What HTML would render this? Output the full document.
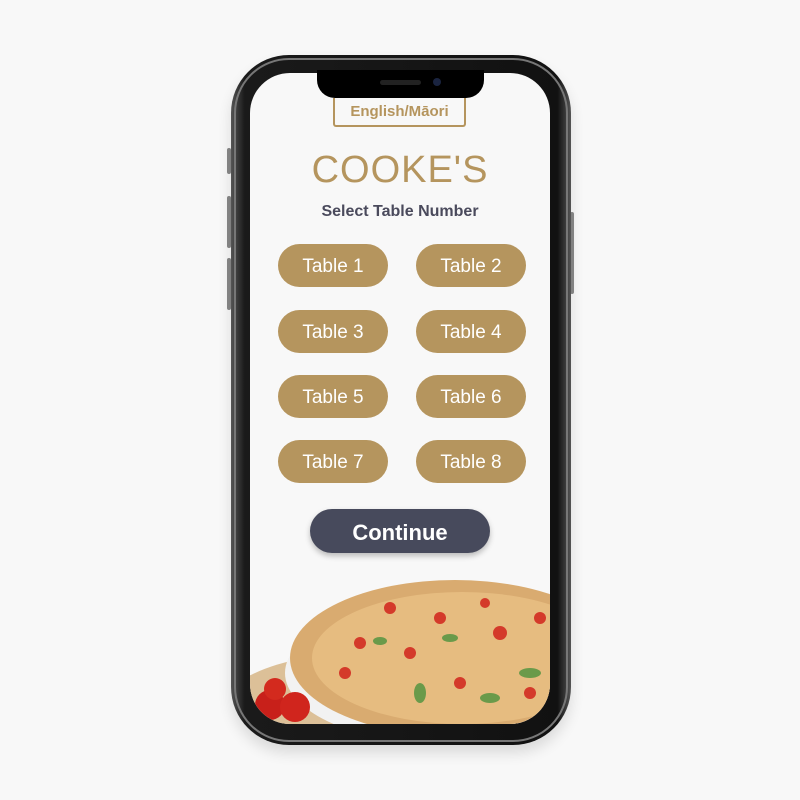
<!DOCTYPE html>
<html><head><style>
body{margin:0;width:800px;height:800px;background:#f8f8f8;position:relative;overflow:hidden;font-family:"Liberation Sans","DejaVu Sans",sans-serif}
.phone{position:absolute;left:231px;top:55px;width:340px;height:690px;border-radius:58px;background:linear-gradient(90deg,#555,#1a1a1a 4%,#111 96%,#555);box-shadow:0 8px 14px rgba(0,0,0,.12)}
.rim{position:absolute;left:234px;top:58px;width:334px;height:684px;border-radius:55px;border:2px solid #777;box-sizing:border-box}
.btn{position:absolute;background:#888;border-radius:2px;width:4px}
.screen{position:absolute;left:250px;top:73px;width:300px;height:651px;border-radius:40px;background:#f8f8f8;overflow:hidden}
.notch{position:absolute;left:317px;top:70px;width:167px;height:28px;background:#000;border-radius:0 0 18px 18px}
.t{position:absolute;color:#fff;background:#b5955e;border-radius:22px;width:110px;height:43px;line-height:45px;text-align:center;font-size:19px}
</style></head><body>
<div class="btn" style="left:227px;top:148px;height:26px"></div>
<div class="btn" style="left:227px;top:196px;height:52px"></div>
<div class="btn" style="left:227px;top:258px;height:52px"></div>
<div class="btn" style="left:570px;top:212px;height:82px"></div>
<div class="phone"></div>
<div class="rim"></div>
<div class="screen">
<svg width="300" height="651" style="position:absolute;left:0;top:0">
<ellipse cx="110" cy="650" rx="150" ry="70" fill="#dcc098"/>
<ellipse cx="200" cy="600" rx="165" ry="72" fill="#f2f2f2"/>
<ellipse cx="205" cy="585" rx="165" ry="78" fill="#d9ab70"/>
<ellipse cx="212" cy="585" rx="150" ry="66" fill="#e6bc80"/>
<g fill="#d43a2a"><circle cx="110" cy="570" r="6"/><circle cx="160" cy="580" r="6"/><circle cx="190" cy="545" r="6"/><circle cx="250" cy="560" r="7"/><circle cx="210" cy="610" r="6"/><circle cx="280" cy="620" r="6"/><circle cx="95" cy="600" r="6"/><circle cx="140" cy="535" r="6"/><circle cx="235" cy="530" r="5"/><circle cx="290" cy="545" r="6"/></g>
<g fill="#6a9a4a"><ellipse cx="130" cy="568" rx="7" ry="4"/><ellipse cx="200" cy="565" rx="8" ry="4"/><ellipse cx="280" cy="600" rx="11" ry="5"/><ellipse cx="170" cy="620" rx="6" ry="10"/><ellipse cx="240" cy="625" rx="10" ry="5"/></g>
<circle cx="20" cy="632" r="15" fill="#c8201a"/><circle cx="45" cy="634" r="15" fill="#d0251d"/><circle cx="25" cy="616" r="11" fill="#d32a1e"/>
</svg>
<div style="position:absolute;left:83px;top:25px;width:133px;height:29px;border:2px solid #b5955e;border-top:none;border-radius:0 0 3px 3px;box-sizing:border-box;color:#b5955e;font-size:15px;font-weight:bold;text-align:center;line-height:27px">English/Māori</div>
<div style="position:absolute;left:0;width:300px;top:76px;text-align:center;color:#b5955e;font-size:38px;letter-spacing:1px">COOKE'S</div>
<div style="position:absolute;left:0;width:300px;top:130px;text-align:center;color:#4a4a5c;font-size:16px;font-weight:bold">Select Table Number</div>
<div class="t" style="left:28px;top:171px">Table 1</div><div class="t" style="left:166px;top:171px">Table 2</div>
<div class="t" style="left:28px;top:237px">Table 3</div><div class="t" style="left:166px;top:237px">Table 4</div>
<div class="t" style="left:28px;top:302px">Table 5</div><div class="t" style="left:166px;top:302px">Table 6</div>
<div class="t" style="left:28px;top:367px">Table 7</div><div class="t" style="left:166px;top:367px">Table 8</div>
<div style="position:absolute;left:60px;top:436px;width:180px;height:44px;border-radius:22px;background:#474a5c;color:#fff;font-weight:bold;font-size:22px;text-align:center;line-height:47px;box-shadow:0 3px 6px rgba(0,0,0,.25)">Continue</div>
</div>
<div class="notch"></div>
<div style="position:absolute;left:380px;top:80px;width:41px;height:5px;border-radius:3px;background:#222"></div>
<div style="position:absolute;left:433px;top:78px;width:8px;height:8px;border-radius:50%;background:#1a2440"></div>
</body></html>
